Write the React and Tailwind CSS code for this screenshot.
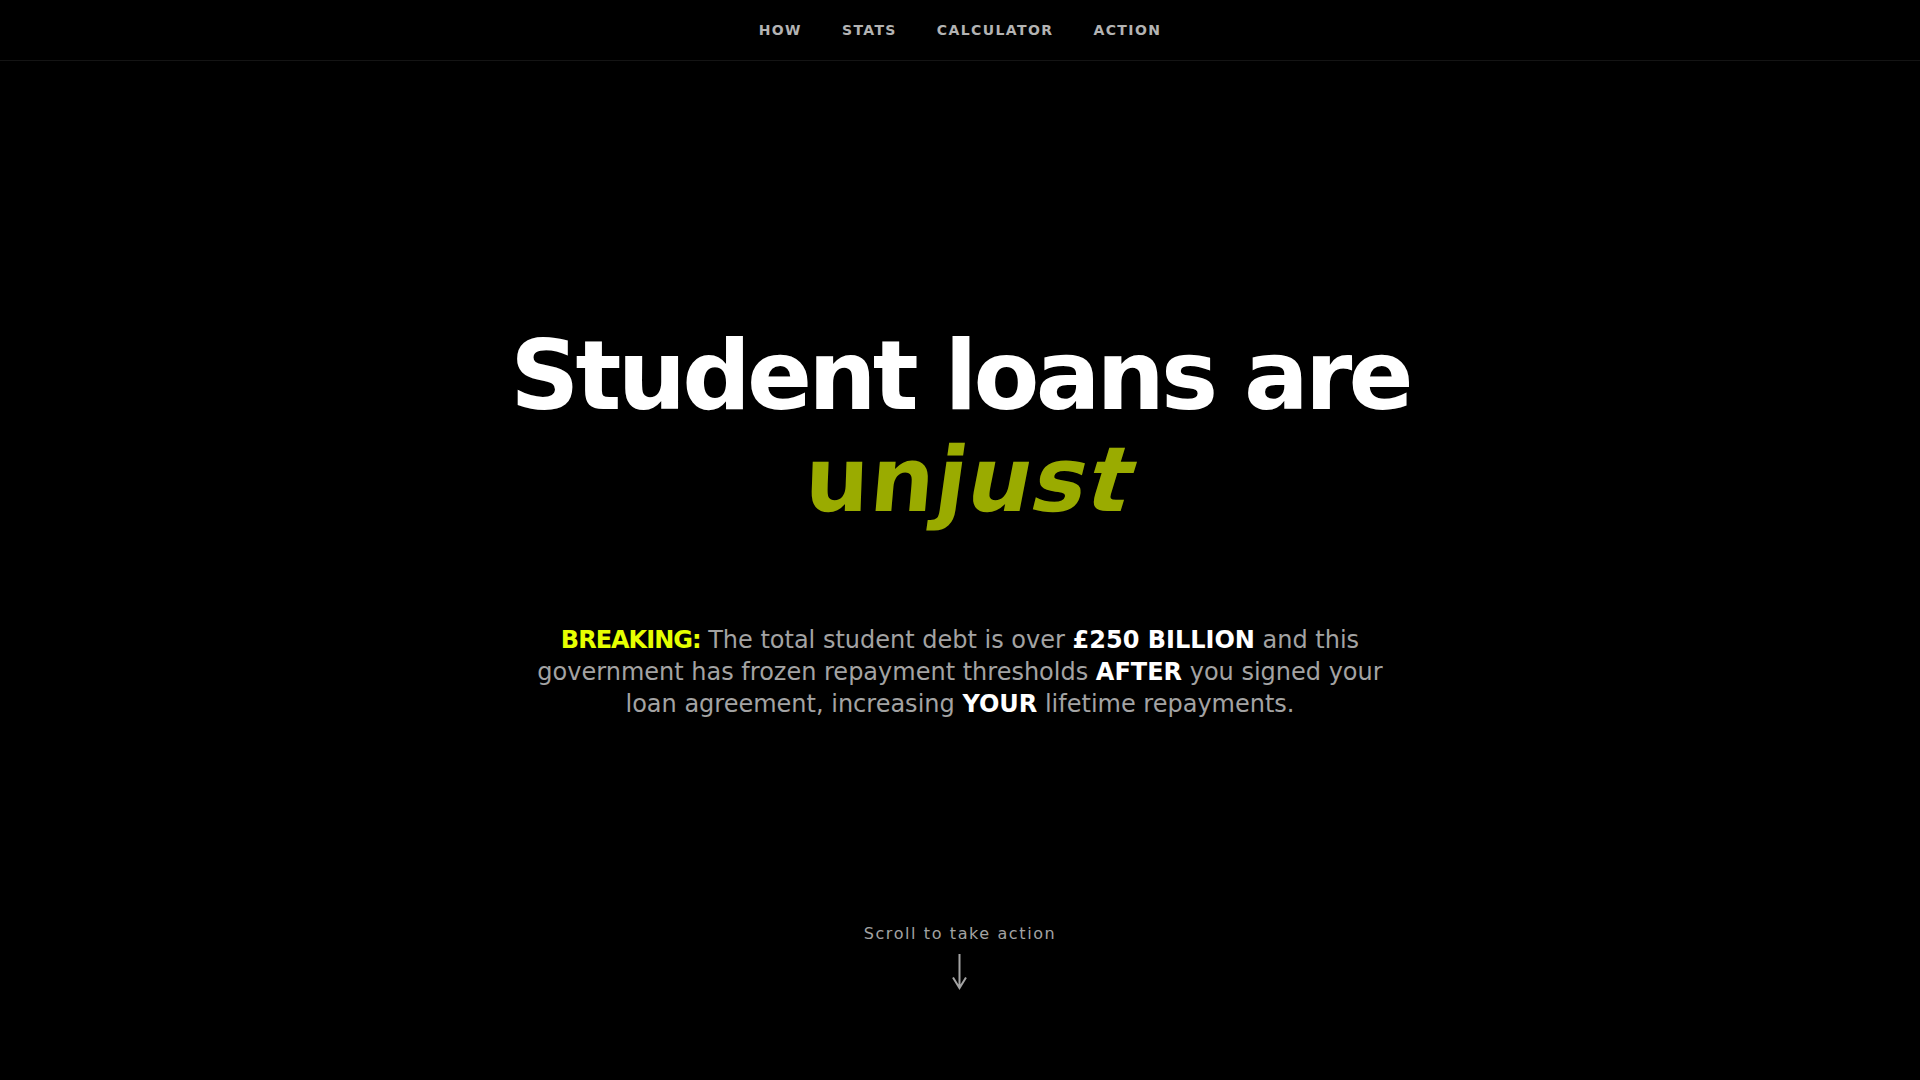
import React from 'react';

const links = [
  { label: 'HOW', href: '#how' },
  { label: 'STATS', href: '#stats' },
  { label: 'CALCULATOR', href: '#calculator' },
  { label: 'ACTION', href: '#action' },
];

// each letter leans a bit further than the one before
const leaningLetters = [
  { char: 'u', lean: '-skew-x-2' },
  { char: 'n', lean: '-skew-x-5' },
  { char: 'j', lean: '-skew-x-8' },
  { char: 'u', lean: '-skew-x-11' },
  { char: 's', lean: '-skew-x-14' },
  { char: 't', lean: '-skew-x-17' },
];

const Nav = () => (
  <header className="border-b border-[#141414]">
    <nav className="flex h-15 items-center justify-center gap-10">
      {links.map(link => (
        <a
          key={link.label}
          href={link.href}
          className="text-[14px] leading-5 font-bold tracking-widest text-[#b3b3b3] hover:text-white"
        >
          {link.label}
        </a>
      ))}
    </nav>
  </header>
);

const Hero = () => (
  <section className="flex flex-1 flex-col items-center justify-center px-6 pt-16 text-center">
    <h1 className="text-[96px] leading-24 font-bold tracking-[-0.04em] text-white">
      Student loans are
      <span className="mt-2 block pl-2 text-[90px] leading-24 tracking-normal text-[#9aab00]">
        {leaningLetters.map((letter, i) => (
          <span key={i} className={`inline-block origin-[50%_82%] ${letter.lean}`}>
            {letter.char}
          </span>
        ))}
      </span>
    </h1>
    <p className="mt-24 max-w-[900px] text-2xl leading-8 text-[#a3a3a3]">
      <strong className="tracking-[-1px] text-[#e6ff00]">BREAKING:</strong> The total student debt is over{' '}
      <strong className="text-white">£250 BILLION</strong> and this government has frozen repayment thresholds{' '}
      <strong className="text-white">AFTER</strong> you signed your loan agreement, increasing{' '}
      <strong className="text-white">YOUR</strong> lifetime repayments.
    </p>
  </section>
);

const ScrollHint = () => (
  <a href="#how" className="mb-[90px] flex flex-col items-center gap-2 self-center text-[#a3a3a3]">
    <span className="text-base leading-6 tracking-widest">Scroll to take action</span>
    <svg width="16" height="36" viewBox="0 0 16 36" fill="none" stroke="currentColor" strokeWidth="2" aria-hidden="true">
      <path d="M7.5 0v34M1 23.5L7.5 34L14 23.5" />
    </svg>
  </a>
);

const App = () => {
  return (
    <div className="flex min-h-screen flex-col bg-black font-['DejaVu_Sans',sans-serif]">
      <Nav />
      <main className="flex flex-1 flex-col">
        <Hero />
        <ScrollHint />
      </main>
    </div>
  );
};

export default App;
